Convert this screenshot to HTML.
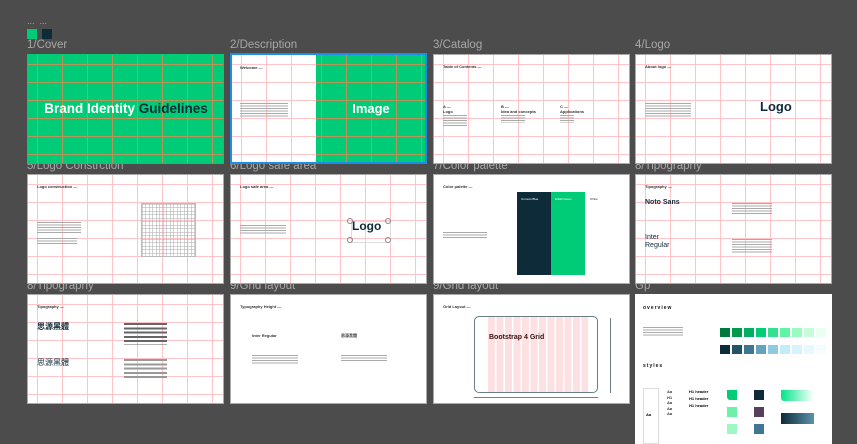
<!DOCTYPE html>
<html><head><meta charset="utf-8"><style>
*{margin:0;padding:0;box-sizing:border-box}
body{width:857px;height:442px;background:#4c4c4c;overflow:hidden;position:relative;font-family:"Liberation Sans","Noto Sans CJK TC",sans-serif}
.lbl{position:absolute;color:#a8a8a8;font-size:11.5px;z-index:0;white-space:nowrap}
.f{position:absolute;width:197px;height:110px;background:#fff;overflow:hidden;z-index:1;border:1px solid #aaa}
.gw{background-image:repeating-linear-gradient(90deg,transparent 0 9px,#ffc3c8 9px 10px,transparent 10px 25px),repeating-linear-gradient(180deg,transparent 0 9px,#ffc3c8 9px 10px,transparent 10px 18px);background-position:0 0}
.gg{background-color:#00cc77;background-image:repeating-linear-gradient(90deg,transparent 0 9px,#b89458 9px 10px,transparent 10px 25px),repeating-linear-gradient(180deg,transparent 0 9px,#b89458 9px 10px,transparent 10px 18px)}
.t{position:absolute;font-size:4px;color:#333;font-weight:bold;white-space:nowrap}
.tx{position:absolute;background:repeating-linear-gradient(180deg,#aaa 0 1px,transparent 1px 2.5px)}
.a{position:absolute}
</style></head><body>
<div class="lbl" style="left:27px;top:16px;font-size:9px">... &nbsp;...</div>
<div class="a" style="left:27px;top:29px;width:10px;height:10px;background:#00cc77"></div>
<div class="a" style="left:42px;top:29px;width:10px;height:10px;background:#0e2b3a"></div>

<div class="lbl" style="left:27px;top:39px">1/Cover</div>
<div class="lbl" style="left:230px;top:39px">2/Description</div>
<div class="lbl" style="left:433px;top:39px">3/Catalog</div>
<div class="lbl" style="left:635px;top:39px">4/Logo</div>
<div class="lbl" style="left:27px;top:160px">5/Logo Constrction</div>
<div class="lbl" style="left:230px;top:160px">6/Logo safe area</div>
<div class="lbl" style="left:433px;top:160px">7/Color palette</div>
<div class="lbl" style="left:635px;top:160px">8/Tipography</div>
<div class="lbl" style="left:27px;top:280px">8/Tipography</div>
<div class="lbl" style="left:230px;top:280px">9/Grid layout</div>
<div class="lbl" style="left:433px;top:280px">9/Grid layout</div>
<div class="lbl" style="left:635px;top:280px">Gp</div>

<!-- 1 cover -->
<div class="f gg" style="left:27px;top:54px;border-color:#00cc77">
<div class="a" style="left:0;width:196px;top:46px;text-align:center;font-weight:bold;font-size:13.5px;color:#fff">Brand Identity <span style="color:#0e2b3a">Guidelines</span></div></div>
<!-- 2 description -->
<div class="f gw" style="left:230px;top:53px;width:197px;height:111px;border:2px solid #1a8fe8">
<div class="a gg" style="left:84px;top:0;width:110px;height:108px;background-position:-4px 0"></div>
<div class="a" style="left:84px;width:110px;top:46px;text-align:center;color:#fff;font-weight:bold;font-size:13px">Image</div>
<div class="t" style="left:8px;top:10px">Welcome —</div>
<div class="tx" style="left:8px;top:48px;width:48px;height:14px"></div></div>
<!-- 3 catalog -->
<div class="f gw" style="left:433px;top:54px">
<div class="t" style="left:9px;top:9px">Table of Contents —</div>
<div class="t" style="left:9px;top:49px">A —<br>Logo</div><div class="tx" style="left:9px;top:60px;width:24px;height:12px"></div>
<div class="t" style="left:67px;top:49px">B —<br>Idea and concepts</div><div class="tx" style="left:67px;top:60px;width:24px;height:8px"></div>
<div class="t" style="left:126px;top:49px">C —<br>Applications</div><div class="tx" style="left:126px;top:60px;width:14px;height:8px"></div></div>
<!-- 4 logo -->
<div class="f gw" style="left:635px;top:54px">
<div class="t" style="left:9px;top:9px">About logo —</div>
<div class="tx" style="left:9px;top:48px;width:46px;height:14px"></div>
<div class="a" style="left:124px;top:44px;font-size:13px;font-weight:bold;color:#0e2b3a">Logo</div></div>
<!-- 5 -->
<div class="f gw" style="left:27px;top:174px">
<div class="t" style="left:9px;top:9px">Logo construction —</div>
<div class="tx" style="left:9px;top:47px;width:44px;height:12px"></div>
<div class="tx" style="left:9px;top:63px;width:40px;height:6px"></div>
<div class="a" style="left:113px;top:28px;width:55px;height:54px;border:1px solid #bbb;background-image:repeating-linear-gradient(90deg,#aaa 0 0.5px,transparent 0.5px 3.5px),repeating-linear-gradient(180deg,#aaa 0 0.5px,transparent 0.5px 3.5px)"></div></div>
<!-- 6 -->
<div class="f gw" style="left:230px;top:174px">
<div class="t" style="left:9px;top:9px">Logo safe area —</div>
<div class="tx" style="left:9px;top:50px;width:46px;height:10px"></div>
<div class="a" style="left:120px;top:46px;width:40px;height:22px;border:1px solid #ddd"></div>
<div class="a" style="left:121px;top:44px;font-size:12px;font-weight:bold;color:#0e2b3a">Logo</div>
<div class="a" style="left:116px;top:43px;width:6px;height:6px;border:1px solid #888;border-radius:50%"></div>
<div class="a" style="left:154px;top:43px;width:6px;height:6px;border:1px solid #888;border-radius:50%"></div>
<div class="a" style="left:116px;top:62px;width:6px;height:6px;border:1px solid #888;border-radius:50%"></div>
<div class="a" style="left:154px;top:62px;width:6px;height:6px;border:1px solid #888;border-radius:50%"></div></div>
<!-- 7 palette -->
<div class="f" style="left:433px;top:174px">
<div class="t" style="left:9px;top:9px">Color palette —</div>
<div class="tx" style="left:9px;top:57px;width:44px;height:7px"></div>
<div class="a" style="left:83px;top:17px;width:34px;height:83px;background:#0e2b3a"></div>
<div class="a" style="left:117px;top:17px;width:34px;height:83px;background:#00cc77"></div>
<div class="t" style="left:87px;top:22px;color:#fff;font-weight:normal;font-size:3px">Unmoto Blue</div>
<div class="t" style="left:121px;top:22px;color:#fff;font-weight:normal;font-size:3px">Edtall Green</div>
<div class="t" style="left:156px;top:22px;font-weight:normal;font-size:3px">White</div></div>
<!-- 8 typo -->
<div class="f gw" style="left:635px;top:174px">
<div class="t" style="left:9px;top:9px">Tipography —</div>
<div class="a" style="left:9px;top:24px;font-size:7px;font-weight:bold;color:#0e2b3a">Noto Sans</div>
<div class="a" style="left:9px;top:59px;font-size:7px;line-height:8px;color:#0e2b3a">Inter<br>Regular</div>
<div class="tx" style="left:96px;top:28px;width:40px;height:12px"></div>
<div class="tx" style="left:96px;top:64px;width:40px;height:14px"></div></div>
<!-- 8 cjk -->
<div class="f gw" style="left:27px;top:294px">
<div class="t" style="left:9px;top:9px">Tipography —</div>
<div class="a" style="left:9px;top:26px;font-size:8px;font-weight:bold;color:#0e2b3a">思源黑體</div>
<div class="a" style="left:9px;top:62px;font-size:8px;color:#0e2b3a">思源黑體</div>
<div class="tx" style="left:96px;top:28px;width:43px;height:22px;background:repeating-linear-gradient(180deg,#666 0 2px,transparent 2px 4.3px)"></div>
<div class="tx" style="left:96px;top:64px;width:43px;height:20px;background:repeating-linear-gradient(180deg,#999 0 2px,transparent 2px 4.3px)"></div></div>
<!-- 9 grid height -->
<div class="f" style="left:230px;top:294px">
<div class="t" style="left:9px;top:9px">Typography Height —</div>
<div class="t" style="left:21px;top:38px">Inter Regular</div>
<div class="t" style="left:110px;top:38px">思源黑體</div>
<div class="tx" style="left:21px;top:60px;width:46px;height:10px"></div>
<div class="tx" style="left:110px;top:60px;width:46px;height:6px"></div></div>
<!-- 9 bootstrap -->
<div class="f" style="left:433px;top:294px">
<div class="t" style="left:9px;top:9px">Grid Layout —</div>
<div class="a" style="left:40px;top:21px;width:124px;height:77px;border:1px solid #6a7f88;border-radius:5px"></div>
<div class="a" style="left:54px;top:22px;width:100px;height:75px;background:repeating-linear-gradient(90deg,#fde0e2 0 7px,#fff 7px 8.5px)"></div>
<div class="a" style="left:55px;top:39px;font-size:7px;font-weight:bold;color:#3a1010">Bootstrap 4 Grid</div>
<div class="a" style="left:176px;top:23px;width:1px;height:75px;background:#6a7f88"></div>
<div class="a" style="left:40px;top:102px;width:124px;height:1px;background:#6a7f88"></div></div>
<!-- Gp -->
<div class="f" style="left:635px;top:294px;height:150px;border:none">
<div class="a" style="left:8px;top:11px;font-size:5px;font-weight:bold;letter-spacing:1px;color:#111">overview</div>
<div class="tx" style="left:8px;top:33px;width:40px;height:10px"></div>
<div class="a" style="left:85px;top:34px;display:flex;gap:2px">
<i style="width:10px;height:9px;background:#007a3a"></i><i style="width:10px;height:9px;background:#009a4c"></i><i style="width:10px;height:9px;background:#00b060"></i><i style="width:10px;height:9px;background:#00cc77"></i><i style="width:10px;height:9px;background:#33e08f"></i><i style="width:10px;height:9px;background:#5ff5a4"></i><i style="width:10px;height:9px;background:#98fbc0"></i><i style="width:10px;height:9px;background:#c5fdd8"></i><i style="width:10px;height:9px;background:#ebfff1"></i></div>
<div class="a" style="left:85px;top:51px;display:flex;gap:2px">
<i style="width:10px;height:9px;background:#0e2b3a"></i><i style="width:10px;height:9px;background:#245266"></i><i style="width:10px;height:9px;background:#3f7691"></i><i style="width:10px;height:9px;background:#64a2bd"></i><i style="width:10px;height:9px;background:#90c9e0"></i><i style="width:10px;height:9px;background:#c3ecfb"></i><i style="width:10px;height:9px;background:#d8f3fd"></i><i style="width:10px;height:9px;background:#e7f8fe"></i><i style="width:10px;height:9px;background:#f5fcff"></i></div>
<div class="a" style="left:8px;top:69px;font-size:5px;font-weight:bold;letter-spacing:1px;color:#111">styles</div>
<div class="a" style="left:8px;top:94px;width:16px;height:56px;border:1px solid #ddd"></div>
<div class="a" style="left:11px;top:118px;font-size:4px;font-weight:bold">Aa</div>
<div class="a" style="left:32px;top:95px;font-size:4px;line-height:5.5px;color:#333;font-weight:bold">Aa<br>H1<br>Aa<br>Aa<br>Aa</div>
<div class="a" style="left:54px;top:94px;font-size:4px;line-height:7px;font-weight:bold">H1 header<br>H1 header<br>H1 header</div>
<div class="a" style="left:92px;top:96px;width:10px;height:10px;background:#00cc77;border-radius:0 0 0 3px"></div>
<div class="a" style="left:92px;top:113px;width:10px;height:10px;background:#6ff0a8"></div>
<div class="a" style="left:92px;top:130px;width:10px;height:10px;background:#9ff7c3"></div>
<div class="a" style="left:119px;top:96px;width:10px;height:10px;background:#0e2b3a"></div>
<div class="a" style="left:119px;top:113px;width:10px;height:10px;background:#56405a"></div>
<div class="a" style="left:119px;top:130px;width:10px;height:10px;background:#3f7691"></div>
<div class="a" style="left:146px;top:96px;width:33px;height:11px;background:linear-gradient(90deg,#00e68a,#fff);border-radius:0 0 0 3px"></div>
<div class="a" style="left:146px;top:119px;width:33px;height:11px;background:linear-gradient(90deg,#0e2b3a,#5a94aa)"></div></div>
</body></html>
